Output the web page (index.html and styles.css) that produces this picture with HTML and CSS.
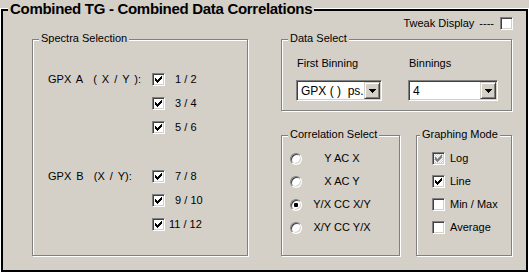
FILE: index.html
```html
<!DOCTYPE html>
<html>
<head>
<meta charset="utf-8">
<title>Combined TG - Combined Data Correlations</title>
<link rel="stylesheet" href="styles.css">
</head>
<body>
<div class="frame">
  <div class="frame-title">Combined TG - Combined Data Correlations</div>
  <div class="tweak-row">
    <span class="tweak-label">Tweak Display</span><span class="dashes">----</span><span class="cb"></span>
  </div>
  <div class="main">
    <div class="group spectra">
      <div class="legend">Spectra Selection</div>
      <div class="gpx gpx-a">
        <div class="gpx-label">GPX A&nbsp;&nbsp;( X / Y ):</div>
        <span class="cb"><svg class="check" width="7" height="7" viewBox="0 0 7 7"><path d="M0 2H1V3H2V4H3V3H4V2H5V1H6V0H7V3H6V4H5V5H4V6H3V7H2V6H1V5H0Z"/></svg></span><span class="lbl">  1 / 2</span>
        <span class="cb"><svg class="check" width="7" height="7" viewBox="0 0 7 7"><path d="M0 2H1V3H2V4H3V3H4V2H5V1H6V0H7V3H6V4H5V5H4V6H3V7H2V6H1V5H0Z"/></svg></span><span class="lbl">  3 / 4</span>
        <span class="cb"><svg class="check" width="7" height="7" viewBox="0 0 7 7"><path d="M0 2H1V3H2V4H3V3H4V2H5V1H6V0H7V3H6V4H5V5H4V6H3V7H2V6H1V5H0Z"/></svg></span><span class="lbl">  5 / 6</span>
      </div>
      <div class="gpx gpx-b">
        <div class="gpx-label">GPX B&nbsp;&nbsp;(X / Y):</div>
        <span class="cb"><svg class="check" width="7" height="7" viewBox="0 0 7 7"><path d="M0 2H1V3H2V4H3V3H4V2H5V1H6V0H7V3H6V4H5V5H4V6H3V7H2V6H1V5H0Z"/></svg></span><span class="lbl">  7 / 8</span>
        <span class="cb"><svg class="check" width="7" height="7" viewBox="0 0 7 7"><path d="M0 2H1V3H2V4H3V3H4V2H5V1H6V0H7V3H6V4H5V5H4V6H3V7H2V6H1V5H0Z"/></svg></span><span class="lbl">  9 / 10</span>
        <span class="cb"><svg class="check" width="7" height="7" viewBox="0 0 7 7"><path d="M0 2H1V3H2V4H3V3H4V2H5V1H6V0H7V3H6V4H5V5H4V6H3V7H2V6H1V5H0Z"/></svg></span><span class="lbl">11 / 12</span>
      </div>
    </div>
    <div class="right-col">
      <div class="group data">
        <div class="legend">Data Select</div>
        <div class="data-cols">
          <div class="data-col">
            <div class="data-label">First Binning</div>
            <div class="combo combo-first">
              <span class="combo-text">GPX ( )&nbsp;&nbsp;ps.</span>
              <span class="combo-btn"><svg width="7" height="4" viewBox="0 0 7 4"><path d="M0 0H7V1H6V2H5V3H4V4H3V3H2V2H1V1H0Z"/></svg></span>
            </div>
          </div>
          <div class="data-col">
            <div class="data-label">Binnings</div>
            <div class="combo combo-bin">
              <span class="combo-text">4</span>
              <span class="combo-btn"><svg width="7" height="4" viewBox="0 0 7 4"><path d="M0 0H7V1H6V2H5V3H4V4H3V3H2V2H1V1H0Z"/></svg></span>
            </div>
          </div>
        </div>
      </div>
      <div class="bottom-row">
        <div class="group corr">
          <div class="legend">Correlation Select</div>
          <div class="opt-list">
            <div class="opt"><span class="radio"></span><span class="rlbl">Y AC X</span></div>
            <div class="opt"><span class="radio"></span><span class="rlbl">X AC Y</span></div>
            <div class="opt"><span class="radio on"><span class="dot"></span></span><span class="rlbl">Y/X CC X/Y</span></div>
            <div class="opt"><span class="radio"></span><span class="rlbl">X/Y CC Y/X</span></div>
          </div>
        </div>
        <div class="group graph">
          <div class="legend legend-tight">Graphing Mode</div>
          <div class="opt-list">
            <div class="opt"><span class="cb disabled"><svg class="check" width="7" height="7" viewBox="0 0 7 7"><path d="M0 2H1V3H2V4H3V3H4V2H5V1H6V0H7V3H6V4H5V5H4V6H3V7H2V6H1V5H0Z"/></svg></span><span class="glbl">Log</span></div>
            <div class="opt"><span class="cb"><svg class="check" width="7" height="7" viewBox="0 0 7 7"><path d="M0 2H1V3H2V4H3V3H4V2H5V1H6V0H7V3H6V4H5V5H4V6H3V7H2V6H1V5H0Z"/></svg></span><span class="glbl">Line</span></div>
            <div class="opt"><span class="cb"></span><span class="glbl">Min / Max</span></div>
            <div class="opt"><span class="cb"></span><span class="glbl">Average</span></div>
          </div>
        </div>
      </div>
    </div>
  </div>
</div>
</body>
</html>
```
FILE: styles.css
```css
* { box-sizing: border-box; }
html, body { margin: 0; padding: 0; }
body {
  background: #d4d0c8;
  width: 529px;
  height: 273px;
  overflow: hidden;
  padding: 9px 0 0 1px;
  font-family: "Liberation Sans", Arial, sans-serif;
  font-size: 11px;
  line-height: 13px;
  color: #000;
}
.frame {
  width: 527px;
  height: 263px;
  border: 2px solid #000;
  box-shadow: 0 0 0 1px #fff;
}
.frame-title {
  width: fit-content;
  margin: -10px 0 0 5px;
  padding: 0 2px;
  background: #d4d0c8;
  font-weight: bold;
  font-size: 15px;
  line-height: 15px;
  letter-spacing: -0.3px;
}
.tweak-row {
  display: flex;
  justify-content: flex-end;
  align-items: center;
  height: 13px;
  margin-top: 1px;
  padding-right: 13px;
}
.dashes { margin-left: 5px; margin-right: 6px; }

/* etched group box */
.group {
  border: 1px solid #808080;
  box-shadow: 1px 1px 0 #fff, inset 1px 1px 0 #fff;
}
.legend {
  width: fit-content;
  margin: -8px 0 0 6px;
  padding: 0 2px;
  background: #d4d0c8;
  white-space: nowrap;
}
.legend-tight { margin-left: 3px; }

.main {
  display: flex;
  margin-top: 9px;
  padding-left: 29px;
  gap: 33px;
}
.spectra { width: 216px; height: 217px; }
.gpx {
  display: grid;
  grid-template-columns: 104px 13px auto;
  grid-auto-rows: 13px;
  row-gap: 11px;
  align-items: center;
  padding-left: 15px;
}
.gpx-a { margin-top: 28px; }
.gpx-b { margin-top: 36px; }
.gpx-label { grid-column: 1; grid-row: 1; white-space: pre; word-spacing: 2px; }
.gpx .cb { grid-column: 2; }
.lbl { grid-column: 3; white-space: pre; margin-left: 4px; }

/* checkbox */
.cb {
  position: relative;
  display: inline-flex;
  align-items: center;
  justify-content: center;
  width: 13px;
  height: 13px;
  flex: none;
  background: #fff;
  border: 1px solid;
  border-color: #808080 #fff #fff #808080;
  box-shadow: inset 1px 1px 0 #404040, inset -1px -1px 0 #d4d0c8;
}
.check { display: block; fill: #000; }
.cb.disabled {
  background: repeating-conic-gradient(#d4d0c8 0 25%, #fff 0 50%) 0 0 / 2px 2px;
}
.cb.disabled .check { fill: #808080; }

.right-col { width: 231px; display: flex; flex-direction: column; }
.data { height: 72px; }
.data-cols {
  display: flex;
  gap: 26px;
  padding-left: 14px;
  margin-top: 12px;
}
.data-label { padding-left: 1px; }
.combo {
  display: flex;
  align-items: stretch;
  height: 21px;
  margin-top: 10px;
  background: #fff;
  border: 1px solid;
  border-color: #808080 #fff #fff #808080;
  box-shadow: inset 1px 1px 0 #404040, inset -1px -1px 0 #d4d0c8;
  padding: 2px 2px 2px 4px;
}
.combo-first { width: 86px; }
.combo-bin { width: 90px; }
.combo-text { flex: 1; font-size: 12px; line-height: 17px; white-space: nowrap; overflow: hidden; }
.combo-btn {
  display: flex;
  align-items: center;
  justify-content: center;
  width: 16px;
  margin: -1px -1px -1px 0;
  background: #d4d0c8;
  border: 1px solid;
  border-color: #d4d0c8 #404040 #404040 #d4d0c8;
  box-shadow: inset 1px 1px 0 #fff, inset -1px -1px 0 #808080;
}
.combo-btn svg { display: block; fill: #000; }

.bottom-row { display: flex; gap: 16px; margin-top: 24px; }
.corr { width: 119px; height: 121px; }
.graph { width: 96px; height: 121px; }
.opt-list {
  display: flex;
  flex-direction: column;
  gap: 10px;
  margin-top: 11px;
}
.opt { display: flex; align-items: center; height: 13px; }
.corr .opt-list { padding-left: 8px; }
.graph .opt-list { padding-left: 15px; }

.radio {
  position: relative;
  display: inline-flex;
  align-items: center;
  justify-content: center;
  width: 12px;
  height: 12px;
  flex: none;
  border-radius: 50%;
  background: #fff;
  border: 1px solid;
  border-color: #808080 #fff #fff #808080;
  box-shadow: inset 1px 1px 0 #404040, inset -1px -1px 0 #d4d0c8;
}
.dot { width: 4px; height: 4px; background: #000; border-radius: 1px; }
.rlbl { width: 72px; margin-left: 4px; text-align: center; white-space: nowrap; }
.glbl { margin-left: 5px; white-space: nowrap; }
```
